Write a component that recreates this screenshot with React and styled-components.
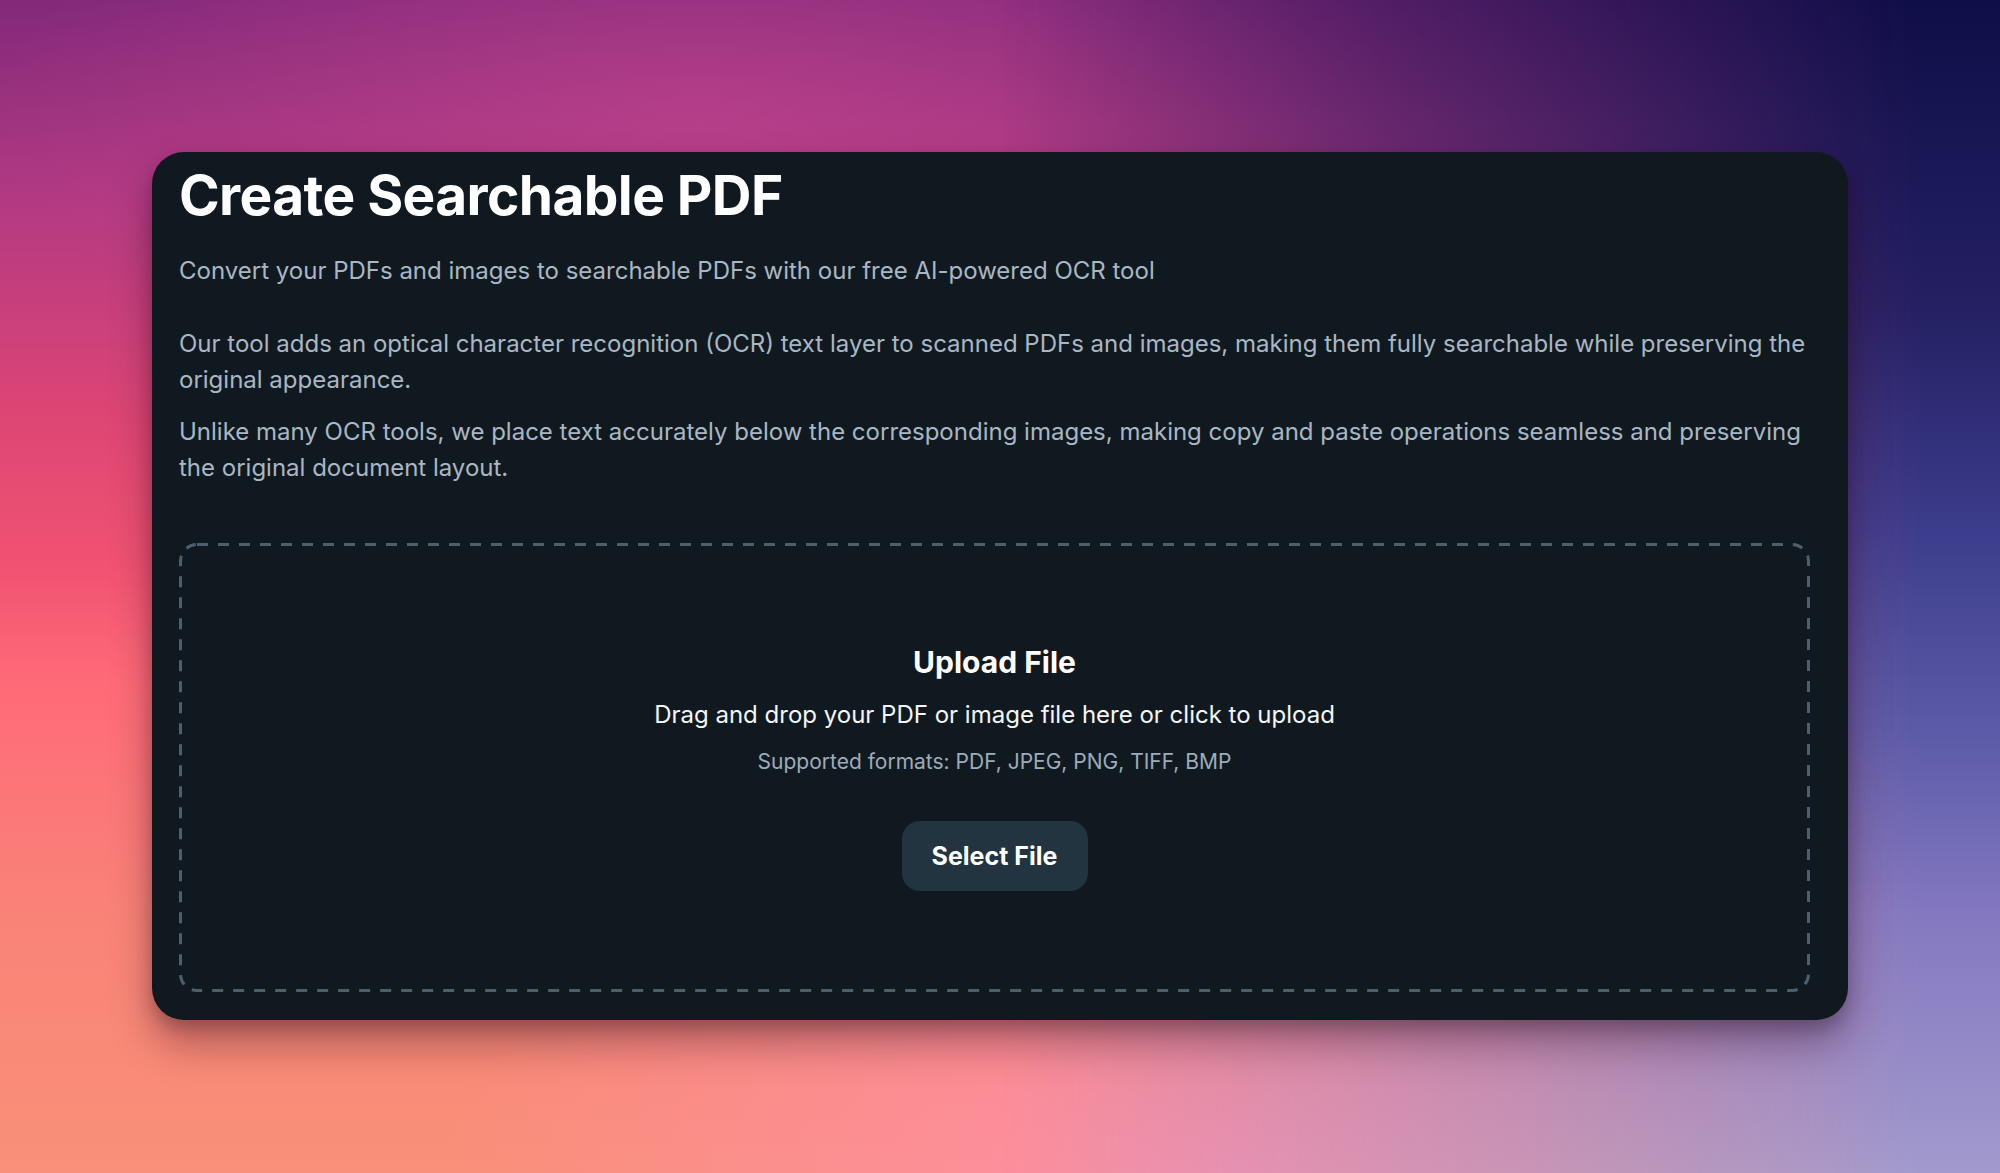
import styled, { createGlobalStyle } from 'styled-components'

// dashed outline drawn as svg so dash length matches the design
const dashOutline = encodeURIComponent(
  `<svg xmlns='http://www.w3.org/2000/svg' width='100%' height='100%'><rect x='0' y='0' width='100%' height='100%' rx='18' ry='18' fill='none' stroke='#4e5f6b' stroke-width='6' stroke-dasharray='11 10' stroke-linecap='butt'/></svg>`
)

const GlobalStyle = createGlobalStyle`
  * {
    box-sizing: border-box;
  }

  html,
  body {
    margin: 0;
    height: 100%;
  }

  body {
    font-family: Inter, 'Noto Sans', sans-serif;
    background:
      radial-gradient(ellipse 40% 32% at 62% 100%, rgba(255, 142, 174, 0.9) 0%, rgba(255, 142, 174, 0) 100%),
      radial-gradient(ellipse 35% 25% at 35% 10%, rgba(200, 72, 145, 0.55) 0%, rgba(200, 72, 145, 0) 100%),
      linear-gradient(180deg, #82297a 0%, #b23a82 17%, #de4674 36%, #f05272 48%, #ff6a78 58%, #f98378 78%, #f99078 100%);
  }

  #root {
    min-height: 100%;
  }
`

export default function App() {
  return (
    <>
      <GlobalStyle />
      <Page>
        <Card>
          <Title>Create Searchable PDF</Title>
          <Lead>
            Convert your PDFs and images to searchable PDFs with our free
            AI-powered OCR tool
          </Lead>
          <Paragraph>
            Our tool adds an optical character recognition (OCR) text layer to
            scanned PDFs and images, making them fully searchable while
            preserving the original appearance.
          </Paragraph>
          <Paragraph>
            Unlike many OCR tools, we place text accurately below the
            corresponding images, making copy and paste operations seamless and
            preserving the original document layout.
          </Paragraph>

          <DropZone>
            <DropTitle>Upload File</DropTitle>
            <DropText>
              Drag and drop your PDF or image file here or click to upload
            </DropText>
            <Formats>Supported formats: PDF, JPEG, PNG, TIFF, BMP</Formats>
            <SelectButton type="button">Select File</SelectButton>
          </DropZone>
        </Card>
      </Page>
    </>
  )
}

const Page = styled.main`
  position: relative;
  min-height: 1173px;
  padding: 152px 152px 0 152px;
  overflow: hidden;

  &::before {
    content: '';
    position: absolute;
    inset: 0;
    background: linear-gradient(180deg, #0e0e48 0%, #242062 26%, #3c3c8c 45%, #5a5aa8 62%, #8478c0 78%, #a29ace 100%);
    mask-image: linear-gradient(to right, transparent 50%, #000 96%);
    -webkit-mask-image: linear-gradient(to right, transparent 50%, #000 96%);
    pointer-events: none;
  }
`

const Card = styled.section`
  position: relative;
  width: 1696px;
  height: 868px;
  background-color: #111920;
  border-radius: 32px;
  padding: 8px 38px 28px 27px;
  box-shadow: 0 24px 40px rgba(40, 10, 30, 0.35), 0 8px 16px rgba(0, 0, 0, 0.2);
  display: flex;
  flex-direction: column;
`

const Title = styled.h1`
  margin: 0 0 23px;
  font-size: 55px;
  line-height: 70px;
  font-weight: 700;
  color: #ffffff;
  letter-spacing: -0.6px;
`

const Lead = styled.p`
  margin: 0 0 37px;
  font-size: 24px;
  line-height: 36px;
  color: #a9b7c4;
`

const Paragraph = styled.p`
  margin: 0 0 16px;
  font-size: 24px;
  line-height: 36px;
  color: #a9b7c4;

  &:last-of-type {
    margin-bottom: 0;
  }
`

const DropZone = styled.div`
  flex: 1;
  min-height: 0;
  margin-top: 57px;
  border-radius: 18px;
  background-image: url("data:image/svg+xml,${dashOutline}");
  display: flex;
  flex-direction: column;
  align-items: center;
  justify-content: center;
  text-align: center;
`

const DropTitle = styled.h2`
  margin: 0 0 17px;
  font-size: 30px;
  line-height: 36px;
  font-weight: 700;
  color: #ffffff;
`

const DropText = styled.p`
  margin: 0 0 15px;
  font-size: 24px;
  line-height: 36px;
  color: #f4f6f8;
`

const Formats = styled.p`
  margin: 0 0 45px;
  font-size: 21px;
  line-height: 28px;
  color: #9cacba;
`

const SelectButton = styled.button`
  width: 186px;
  height: 70px;
  border: none;
  border-radius: 18px;
  background-color: #22343f;
  color: #ffffff;
  font-family: inherit;
  font-size: 25px;
  font-weight: 700;
  cursor: pointer;
`
